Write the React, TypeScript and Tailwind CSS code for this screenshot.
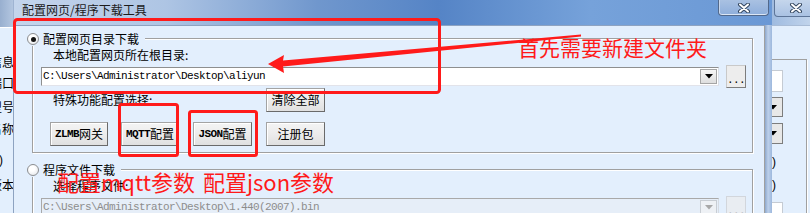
import React from "react";

/* Win7-style "配置网页/程序下载工具" dialog with red annotation overlay */

const MONO = "font-['Liberation_Mono','Noto_Sans_CJK_SC',monospace] text-[11px] tracking-[-0.6px]";

function Radio({ checked = false }: { checked?: boolean }) {
  return (
    <span className="flex h-[12px] w-[12px] shrink-0 items-center justify-center rounded-full border border-[#8b8d90] bg-[radial-gradient(circle_at_40%_35%,#ffffff_30%,#dfe2e6)]">
      {checked && <span className="h-[5px] w-[5px] rounded-full bg-[#141414]" />}
    </span>
  );
}

function Btn({ children, className = "" }: { children: React.ReactNode; className?: string }) {
  return (
    <div
      className={`flex h-[24px] shrink-0 items-center justify-center border border-[#a3a3a3] border-b-[#6a6a6a] border-r-[#6a6a6a] bg-[linear-gradient(#f4f4f4,#ececec_50%,#e0e0e0)] shadow-[inset_1px_1px_0_#ffffff] text-[12px] leading-[14px] ${className}`}
    >
      {children}
    </div>
  );
}

function Latin({ children }: { children: React.ReactNode }) {
  return <span className={`${MONO} font-bold`}>{children}</span>;
}

function Triangle({ color }: { color: string }) {
  return (
    <svg width="8" height="5" viewBox="0 0 8 5">
      <polygon points="0,0 8,0 4,4.5" fill={color} />
    </svg>
  );
}

function Combo({ value, disabled = false }: { value: string; disabled?: boolean }) {
  return (
    <div
      className={`flex h-[19px] w-[678px] shrink-0 items-center border ${
        disabled
          ? "border-[#a9a9a9] border-b-[#d6dbe2] border-r-[#d6dbe2] bg-[#e6eef8]"
          : "border-[#8e8f8f] border-b-[#e2e3ea] border-r-[#dbdfe6] bg-white"
      }`}
    >
      <span
        className={`flex-1 overflow-hidden whitespace-nowrap pl-[1px] leading-[15px] ${MONO} ${
          disabled ? "text-[#8d8d8d]" : "text-black"
        }`}
      >
        {value}
      </span>
      <div
        className={`mr-[1px] flex h-[15px] w-[17px] items-center justify-center border ${
          disabled
            ? "border-[#c8cdd3] bg-[#eef1f5]"
            : "border-[#a5a5a5] bg-[linear-gradient(#f6f6f6,#dedede)]"
        }`}
      >
        <Triangle color={disabled ? "#a8a8a8" : "#000000"} />
      </div>
    </div>
  );
}

function DotsBtn({ disabled = false }: { disabled?: boolean }) {
  return (
    <div
      className={`flex h-[23px] w-[20px] shrink-0 items-end justify-center border pb-[3px] ${
        disabled
          ? "border-[#d2d6dc] bg-[#e9edf2] text-[#b0b0b0]"
          : "border-[#c9c9c9] border-b-[#7d7d7d] border-r-[#7d7d7d] bg-[#ededed] text-black"
      } ${MONO} leading-[8px]`}
    >
      ...
    </div>
  );
}

function GroupBox({
  label,
  checked,
  className = "",
  children,
}: {
  label: string;
  checked?: boolean;
  className?: string;
  children: React.ReactNode;
}) {
  return (
    <div
      className={`relative ml-[18px] flex w-[721px] shrink-0 flex-col border border-[#a0a0a0] shadow-[1px_1px_0_#ffffff,inset_1px_1px_0_#ffffff] ${className}`}
    >
      <div className="absolute left-[-6px] top-[-7px] flex h-[14px] items-center gap-[4px] bg-[#e3effd] pr-[6px]">
        <Radio checked={checked} />
        <span className="text-[12px] leading-[14px]">{label}</span>
      </div>
      {children}
    </div>
  );
}

function CloseX() {
  return (
    <svg width="14" height="10" viewBox="0 0 14 10">
      <path d="M3 1.5 L11 8.5 M11 1.5 L3 8.5" stroke="#33465f" strokeWidth="4" strokeLinecap="round" />
      <path d="M3 1.5 L11 8.5 M11 1.5 L3 8.5" stroke="#ffffff" strokeWidth="2" strokeLinecap="round" />
    </svg>
  );
}

export default function App() {
  return (
    <div className="relative flex h-[213px] w-[810px] overflow-hidden bg-[#e3effd] font-['Noto_Sans_CJK_SC',sans-serif] text-black">
      {/* window behind, left */}
      <div className="flex w-[13px] shrink-0 flex-col overflow-hidden">
        <div className="h-[27px] shrink-0 bg-[linear-gradient(90deg,#98afcf,#b3c6e0)]" />
        <div className="flex flex-1 flex-col border-t border-white bg-[#e3effd] text-[12px] leading-[12px] whitespace-nowrap">
          <span className="ml-[-10px] mt-[28px]">信息</span>
          <span className="ml-[-10px] mt-[9px]">端口</span>
          <span className="ml-[-10px] mt-[12px]">型号</span>
          <span className="ml-[-10px] mt-[10px]">名称</span>
          <span className="ml-[-1px] mt-[19px] font-['Liberation_Sans',sans-serif]">)</span>
          <span className="ml-[-10px] mt-[13px]">版本</span>
        </div>
      </div>

      {/* main dialog */}
      <div className="flex w-[759px] shrink-0 flex-col">
        <div className="flex h-[25px] shrink-0 items-start justify-between border-l border-[#9fb4d2] bg-[linear-gradient(90deg,#c4d5ec_0%,#aec5e4_20%,#7097cd_40%,#5584c6_56%,#76a2da_76%,#6a98d5_100%)]">
          <span className="pl-[8px] pt-[3px] text-[12px] leading-[14px] text-[#1b1b1b]">配置网页/程序下载工具</span>
          <div className="mr-[3px] flex h-[16px] w-[51px] items-center justify-center rounded-b-[4px] border border-t-0 border-[#52698c] bg-[linear-gradient(#a9c1e2,#8eaedb)] shadow-[inset_0_-1px_0_#dbe6f5,inset_1px_0_0_#c8d7ec]">
            <CloseX />
          </div>
        </div>

        <div className="flex flex-1">
          <div className="flex flex-1 flex-col border-l border-r border-t border-[#8ea3c1] border-r-[#a0a0a0] bg-[#e3effd]">
            <GroupBox label="配置网页目录下载" checked className="mt-[12px] h-[115px]">
              <span className="ml-[20px] mt-[10px] text-[12px] leading-[12px]">本地配置网页所在根目录:</span>
              <div className="ml-[8px] mt-[4px] flex h-[23px] items-center gap-[7px]">
                <Combo value={"C:\\Users\\Administrator\\Desktop\\aliyun"} />
                <DotsBtn />
              </div>
              <div className="flex h-[24px] items-center">
                <span className="ml-[20px] w-[213px] text-[12px] leading-[12px]">特殊功能配置选择:</span>
                <Btn className="w-[59px]">清除全部</Btn>
              </div>
              <div className="mt-[10px] flex items-center">
                <Btn className="ml-[17px] w-[58px]">
                  <Latin>ZLMB</Latin>网关
                </Btn>
                <Btn className="ml-[13px] w-[58px]">
                  <Latin>MQTT</Latin>配置
                </Btn>
                <Btn className="ml-[14px] w-[59px]">
                  <Latin>JSON</Latin>配置
                </Btn>
                <Btn className="ml-[14px] w-[59px]">注册包</Btn>
              </div>
            </GroupBox>

            <GroupBox label="程序文件下载" className="mt-[16px] h-[70px]">
              <span className="ml-[20px] mt-[10px] text-[12px] leading-[12px]">选择程序文件:</span>
              <div className="ml-[8px] mt-[4px] flex h-[23px] items-center gap-[7px]">
                <Combo value={"C:\\Users\\Administrator\\Desktop\\1.440(2007).bin"} disabled />
                <DotsBtn disabled />
              </div>
            </GroupBox>
          </div>
          <div className="w-[7px] shrink-0 bg-[linear-gradient(90deg,#8ea8cc,#bdd0ea_45%,#9db8dd)]" />
        </div>
      </div>

      {/* window behind, right */}
      <div className="flex w-[38px] shrink-0 flex-col overflow-hidden">
        <div className="flex h-[25px] shrink-0 items-start bg-[linear-gradient(90deg,#9fbbe0,#c1d4ec)]">
          <div className="ml-[2px] flex h-[17px] w-[40px] shrink-0 items-center justify-center rounded-b-[4px] border border-t-0 border-[#5d7598] bg-[linear-gradient(#c5d6ec,#aac2e3)] pl-[4px]">
            <CloseX />
          </div>
        </div>
        <div className="flex flex-1 flex-col border-t border-[#a9bcd6] bg-[#e3effd]">
          <div className="mt-[33px] flex h-[200px] w-[35px] flex-col border-r border-t border-[#a0a0a0] shadow-[1px_1px_0_#ffffff]">
            <div className="mt-[10px] h-[22px] w-[11px] border border-l-0 border-[#c5cbd3] bg-white" />
            <div className="mt-[5px] flex h-[20px] w-[11px] items-center border border-l-0 border-[#7d7d7d] bg-[#e8e8e8]">
              <svg width="8" height="5" viewBox="0 0 8 5">
                <polygon points="-3,0 5,0 1,4.5" fill="#000" />
              </svg>
            </div>
            <div className="mt-[6px] flex h-[21px] w-[11px] items-center border border-l-0 border-[#7d7d7d] bg-[#e8e8e8]">
              <svg width="8" height="5" viewBox="0 0 8 5">
                <polygon points="-3,0 5,0 1,4.5" fill="#000" />
              </svg>
            </div>
            <span className="mt-[12px] h-[12px] font-['Liberation_Sans',sans-serif] text-[12px] leading-[12px]">)</span>
            <span className="mt-[11px] h-[12px] font-['Liberation_Sans',sans-serif] text-[12px] leading-[12px]">)</span>
            <div className="mt-[11px] h-[22px] w-[11px] border border-l-0 border-[#c5cbd3] bg-white" />
          </div>
        </div>
      </div>

      {/* red annotations drawn on top of the screenshot */}
      <svg className="pointer-events-none absolute left-0 top-0" width="810" height="213" viewBox="0 0 810 213">
        <rect x="14.5" y="19.5" width="425" height="73" rx="3" fill="none" stroke="#ff1a1a" strokeWidth="3" />
        <rect x="119.5" y="104.5" width="58" height="51" rx="2" fill="none" stroke="#ff1a1a" strokeWidth="3" />
        <rect x="189.5" y="111.5" width="67" height="44" rx="2" fill="none" stroke="#ff1a1a" strokeWidth="3" />
        <polygon
          points="268,64 284,55 283,60.5 581,34.5 581,36.5 283,66.5 284,73"
          fill="#ff1a1a"
        />
      </svg>
      <span className="pointer-events-none absolute left-[518px] top-[37px] whitespace-nowrap text-[21px] leading-[21px] text-[#ff1a1a]">
        首先需要新建文件夹
      </span>
      <span className="pointer-events-none absolute left-[57px] top-[170px] whitespace-nowrap text-[22px] leading-[22px] text-[#ff1a1a]">
        配置mqtt参数
      </span>
      <span className="pointer-events-none absolute left-[203px] top-[170px] whitespace-nowrap text-[22px] leading-[22px] text-[#ff1a1a]">
        配置json参数
      </span>
    </div>
  );
}
